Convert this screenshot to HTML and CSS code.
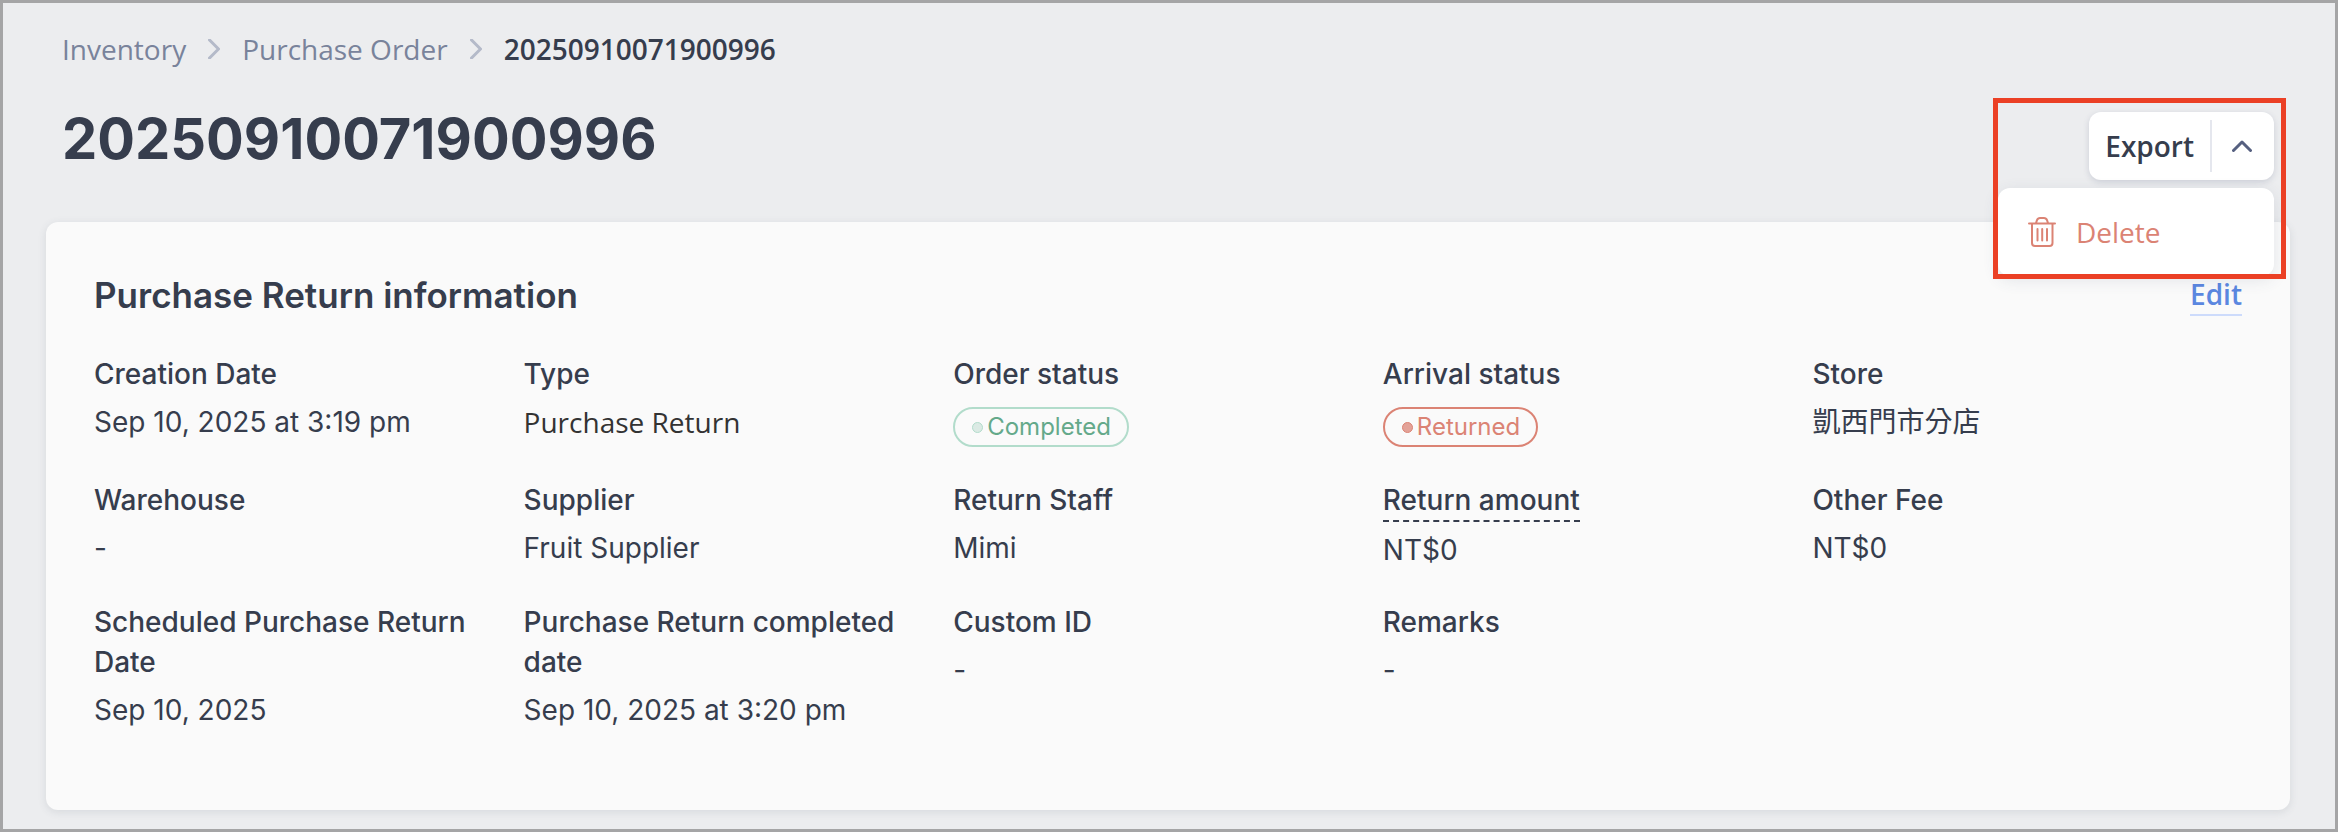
FILE: index.html
```html
<!DOCTYPE html>
<html lang="en">
<head>
<meta charset="utf-8">
<meta name="viewport" content="width=device-width, initial-scale=1">
<title>20250910071900996 – Purchase Order</title>
<link rel="stylesheet" href="styles.css">
</head>
<body>
<main class="page">
  <nav class="breadcrumb" aria-label="Breadcrumb">
    <a class="breadcrumb-link" href="#inventory">Inventory</a>
    <svg class="breadcrumb-sep" viewBox="0 0 12 20" aria-hidden="true"><path d="M1.5 1 10.500 10 1.5 19"/></svg>
    <a class="breadcrumb-link" href="#purchase-order">Purchase Order</a>
    <svg class="breadcrumb-sep" viewBox="0 0 12 20" aria-hidden="true"><path d="M1.5 1 10.500 10 1.5 19"/></svg>
    <span class="breadcrumb-current" aria-current="page">20250910071900996</span>
  </nav>

  <header class="page-header">
    <h1 class="page-title">20250910071900996</h1>
    <div class="actions">
      <div class="split-button">
        <button class="export" type="button">Export</button>
        <button class="toggle" type="button" aria-label="More actions" aria-expanded="true">
          <svg class="chevron" viewBox="0 0 20 12" aria-hidden="true"><path d="M1.5 10.5 10 2l8.500 8.500"/></svg>
        </button>
      </div>
      <div class="menu">
        <button class="menu-item" type="button">
          <svg class="trash" viewBox="0 0 28 32" aria-hidden="true"><path d="M1 7.500h26M8 7l1-2.800Q9.800 2 12 2h4q2.200 0 3 2.200L20 7M4 8v19q0 3 3 3h14.500q3 0 3-3V8M9.500 13v11.500M14.200 13v11.500M19 13v11.500"/></svg>
          Delete
        </button>
      </div>
      <div class="highlight"></div>
    </div>
  </header>

  <section class="card">
    <div class="card-header">
      <h2 class="card-title">Purchase Return information</h2>
      <a class="edit-link" href="#edit">Edit</a>
    </div>
    <dl class="fields">
      <div class="field"><dt>Creation Date</dt><dd>Sep 10, 2025 at 3:19 pm</dd></div>
      <div class="field"><dt>Type</dt><dd class="type-value">Purchase Return</dd></div>
      <div class="field"><dt>Order status</dt><dd class="status"><span class="tag tag-completed">Completed</span></dd></div>
      <div class="field"><dt>Arrival status</dt><dd class="status"><span class="tag tag-returned">Returned</span></dd></div>
      <div class="field"><dt>Store</dt><dd lang="zh-Hant">凱西門市分店</dd></div>
      <div class="field"><dt>Warehouse</dt><dd>-</dd></div>
      <div class="field"><dt>Supplier</dt><dd>Fruit Supplier</dd></div>
      <div class="field"><dt>Return Staff</dt><dd>Mimi</dd></div>
      <div class="field"><dt><span class="hinted">Return amount</span></dt><dd>NT$0</dd></div>
      <div class="field"><dt>Other Fee</dt><dd>NT$0</dd></div>
      <div class="field"><dt>Scheduled Purchase Return Date</dt><dd>Sep 10, 2025</dd></div>
      <div class="field"><dt>Purchase Return completed date</dt><dd>Sep 10, 2025 at 3:20 pm</dd></div>
      <div class="field"><dt>Custom ID</dt><dd>-</dd></div>
      <div class="field"><dt>Remarks</dt><dd>-</dd></div>
    </dl>
  </section>
</main>
</body>
</html>
```
FILE: styles.css
```css
:root {
  --ink: #363d4d;
  --muted: #79839b;
  --red: #db8374;
  --ui: "Open Sans", "Noto Sans", sans-serif;
  --text: Inter, "Noto Sans CJK TC", sans-serif;
}

* {
  box-sizing: border-box;
}

body {
  margin: 0;
  color: var(--ink);
  font: 400 28px/40px var(--text);
}

svg {
  fill: none;
  stroke: currentColor;
  stroke-linecap: round;
  stroke-linejoin: round;
}

button {
  border: 0;
  background: none;
  color: inherit;
  cursor: pointer;
}

.page {
  min-height: 100vh;
  padding: 26px 45px 19px 43px;
  border: 3px solid #a5a5a6;
  background: #ecedef;
}

.breadcrumb {
  display: flex;
  align-items: center;
  gap: 22px;
  padding-left: 16px;
  font-family: var(--ui);
}

.breadcrumb-link {
  color: var(--muted);
  text-decoration: none;
}

.breadcrumb-sep {
  width: 12px;
  height: 20px;
  color: #b4bac9;
  stroke-width: 3;
}

.breadcrumb-current {
  font-weight: 600;
}

.page-header {
  display: flex;
  justify-content: space-between;
  align-items: flex-end;
  padding: 39px 16px 42px;
}

.page-title {
  margin: 0;
  padding-bottom: 10px;
  font-size: 56px;
  line-height: 62px;
  font-weight: 650;
}

.actions {
  position: relative;
}

.split-button {
  display: flex;
  align-items: center;
  height: 68px;
  border-radius: 12px;
  background: #fff;
  box-shadow: 0 2px 6px rgb(60 70 110 / 18%);
}

.export {
  padding: 0 16px;
  font: 600 28px/52px var(--ui);
}

.toggle {
  display: flex;
  align-items: center;
  justify-content: center;
  width: 64px;
  height: 52px;
  padding: 0 2px 0 0;
  border-left: 2px solid #e5e7ee;
  color: #566080;
}

.chevron {
  width: 20px;
  height: 12px;
  stroke-width: 3;
}

.menu {
  position: absolute;
  top: 76px;
  right: 0;
  width: 276px;
  border-radius: 12px;
  background: #fff;
  box-shadow: 0 4px 16px rgb(60 70 110 / 12%);
}

.menu-item {
  display: flex;
  align-items: center;
  gap: 20px;
  width: 100%;
  padding: 24px 30px;
  color: var(--red);
  font: 400 28px/40px var(--ui);
}

.trash {
  width: 28px;
  height: 32px;
  stroke-width: 2;
}

.highlight {
  position: absolute;
  top: -14px;
  right: -12px;
  width: 293px;
  height: 181px;
  border: 5px solid #eb4025;
  pointer-events: none;
}

.card {
  padding: 48px 48px 80px;
  border-radius: 12px;
  background: #fafafa;
  box-shadow: 0 2px 8px rgb(60 70 90 / 12%);
}

.card-header {
  display: flex;
  justify-content: space-between;
  align-items: center;
  margin-bottom: 34px;
}

.card-title {
  margin: 0;
  font-size: 35px;
  line-height: 50px;
  font-weight: 600;
}

.edit-link {
  border-bottom: 2px solid #cddbfb;
  color: #5b87e0;
  font: 600 28px/40px var(--ui);
  text-decoration: none;
}

.fields {
  display: grid;
  grid-template-columns: repeat(5, minmax(0, 1fr));
  row-gap: 32px;
  margin: 0;
}

.field {
  display: flex;
  flex-direction: column;
  gap: 8px;
}

.field dt {
  font-weight: 500;
}

.field dd {
  margin: 0;
}

.field .type-value {
  color: #333;
  font-family: var(--ui);
}

.hinted {
  display: inline-block;
  border-bottom: 2px dashed var(--ink);
}

.field .status {
  display: flex;
  padding: 5px 0 1px;
}

.tag {
  display: flex;
  align-items: center;
  gap: 4px;
  padding: 0 16px 0 17px;
  border: 2px solid;
  border-radius: 20px;
  font-size: 24px;
  line-height: 36px;
}

.tag::before {
  width: 9px;
  height: 9px;
  border: 1px solid;
  border-radius: 50%;
  content: "";
}

.tag-completed {
  border-color: #b2dccb;
  color: #64a98a;
}

.tag-completed::before {
  border-color: #b2dccb;
  background: #dbeae4;
}

.tag-returned {
  border-color: var(--red);
  color: var(--red);
}

.tag-returned::before {
  background: #e3a298;
}
```
